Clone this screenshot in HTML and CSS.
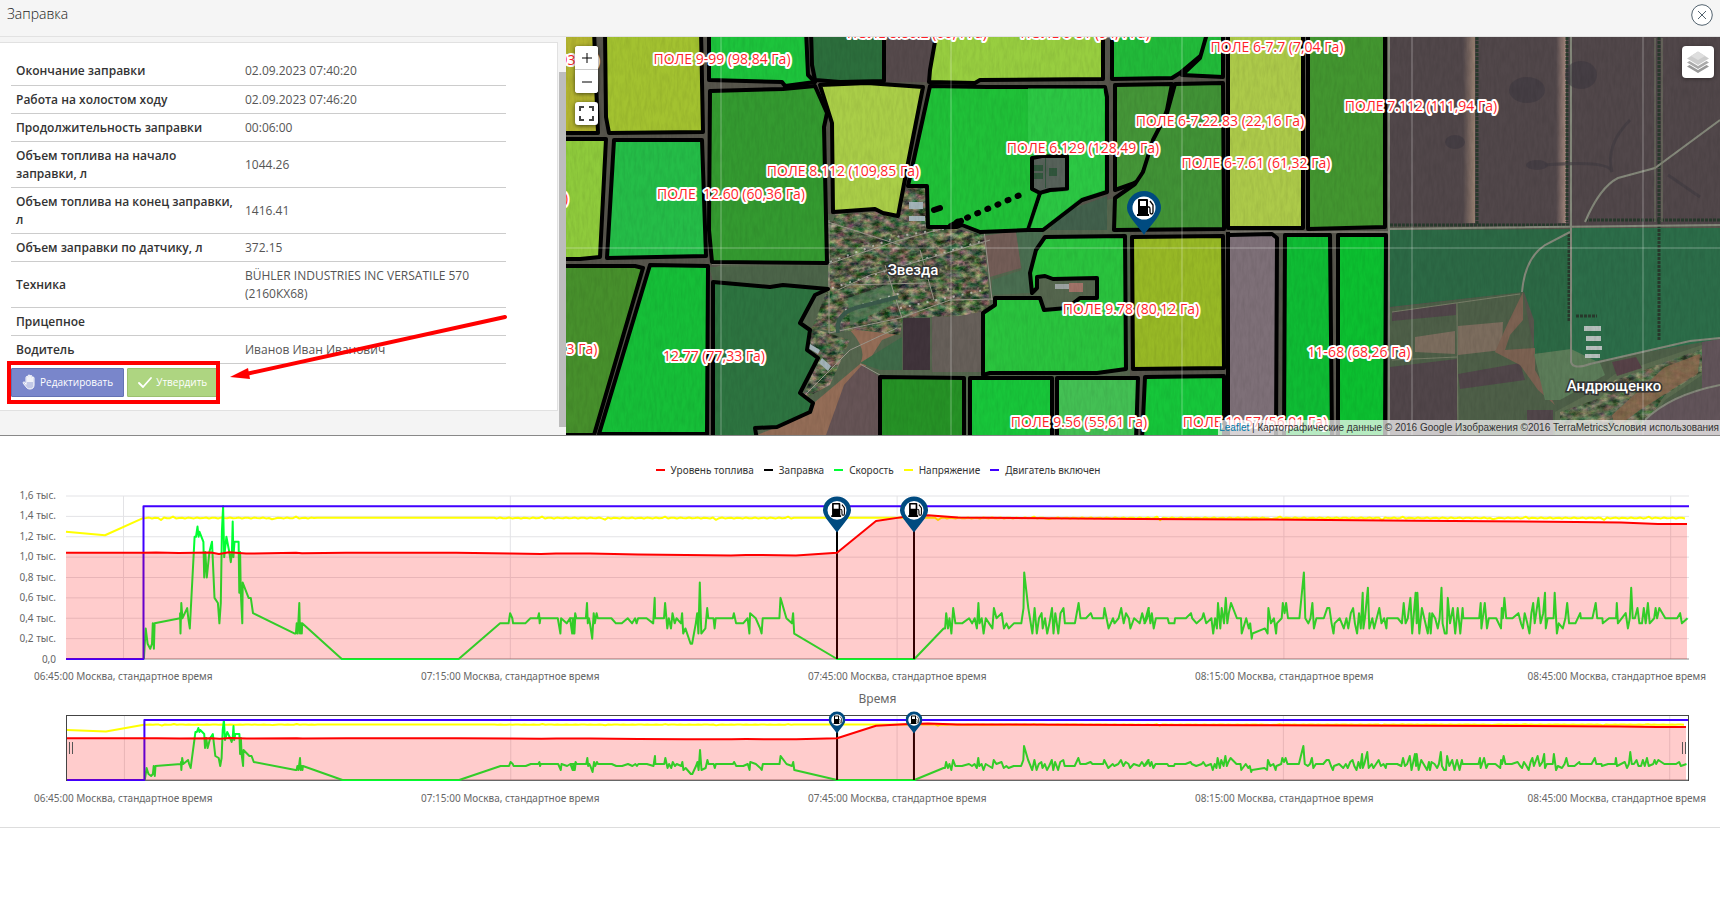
FILE: index.html
```html
<!DOCTYPE html>
<html lang="ru">
<head>
<meta charset="utf-8">
<title>Заправка</title>
<link rel="stylesheet" href="styles.css">
</head>
<body>
<svg class="defs" width="0" height="0" aria-hidden="true">
  <symbol id="fuel-pin" viewBox="0 0 34 44">
    <path d="M17 0A17 17 0 0 0 0 17C0 25 12 36 17 44C22 36 34 25 34 17A17 17 0 0 0 17 0Z" fill="#004b80"/>
    <circle cx="17" cy="17" r="11.500" fill="#fff"/>
    <path d="M12 8h8q1 0 1 1v14h1v2H10v-2h1V9q0-1 1-1zM13 10v5h6v-5z" fill="#000" fill-rule="evenodd"/>
    <path d="M21 16h1q1 0 1 2v3q0 2 1.500 2t1.500-2v-7l-3-4" fill="none" stroke="#000" stroke-width="1.300"/>
  </symbol>
</svg>
<header class="title-bar">
  <h1 class="title">Заправка</h1>
  <button class="close" type="button" aria-label="Закрыть">
    <svg viewBox="0 0 22 22"><circle cx="11" cy="11" r="10.300"/><path d="M7 7l8 8M15 7l-8 8"/></svg>
  </button>
</header>
<main>
<section class="top">
  <div class="side">
    <div class="card">
      <table class="details">
        <tr><th scope="row">Окончание заправки</th><td>02.09.2023 07:40:20</td></tr>
        <tr><th scope="row">Работа на холостом ходу</th><td>02.09.2023 07:46:20</td></tr>
        <tr><th scope="row">Продолжительность заправки</th><td>00:06:00</td></tr>
        <tr><th scope="row">Объем топлива на начало заправки, л</th><td>1044.26</td></tr>
        <tr><th scope="row">Объем топлива на конец заправки, л</th><td>1416.41</td></tr>
        <tr><th scope="row">Объем заправки по датчику, л</th><td>372.15</td></tr>
        <tr><th scope="row">Техника</th><td>BÜHLER INDUSTRIES INC VERSATILE 570 (2160КХ68)</td></tr>
        <tr><th scope="row">Прицепное</th><td></td></tr>
        <tr><th scope="row">Водитель</th><td>Иванов Иван Иванович</td></tr>
      </table>
      <div class="actions">
        <button class="btn btn-edit" type="button">
          <svg viewBox="0 0 14 16"><path d="M4 10V3.500a1 1 0 0 1 2 0V8 2a1 1 0 0 1 2 0v6V2.500a1 1 0 0 1 2 0V8 4a1 1 0 0 1 2 0v7c0 2.500-1.500 4-4 4-2 0-3-.8-4-2.200L1.300 9.300c-.7-1 .6-1.900 1.400-1.100z"/></svg>
          Редактировать</button>
        <button class="btn btn-approve" type="button">
          <svg viewBox="0 0 14 16"><path d="M1 9l4 4 8-9" stroke-width="1.800"/></svg>
          Утвердить</button>
      </div>
    </div>
    <div class="scrollbar"><div class="thumb"></div></div>
    <svg class="callout" viewBox="0 0 520 100" aria-hidden="true">
      <rect x="9" y="52" width="209" height="39" fill="none" stroke="#f00" stroke-width="4"/>
      <path d="M505 6L246 63" stroke="#f00" stroke-width="4" stroke-linecap="round"/>
      <path d="M230 66L248 57L250 68Z" fill="#f00"/>
    </svg>
  </div>
  <div class="map">
    <svg class="map-canvas" viewBox="566 37 1154 398" preserveAspectRatio="xMinYMin slice">
      <defs>
        <filter id="grain" x="0" y="0" width="100%" height="100%">
          <feTurbulence type="fractalNoise" baseFrequency="0.350 0.080" numOctaves="3" seed="4"/>
          <feColorMatrix values="0 0 0 0 0  0 0 0 0 0  0 0 0 0 0  .9 0 0 0 -.3"/>
        </filter>
        <filter id="houses" x="0" y="0" width="100%" height="100%" color-interpolation-filters="sRGB">
          <feTurbulence type="fractalNoise" baseFrequency="0.110 0.180" numOctaves="5" seed="9"/>
          <feColorMatrix values="1.300 0 0 0 -.28  .75 .6 0 0 -.27  .8 .1 .3 0 -.3  0 0 0 0 .8"/>
          <feComposite in2="SourceGraphic" operator="in"/>
        </filter>
        <linearGradient id="lane-a" gradientUnits="userSpaceOnUse" x1="1463" x2="1475" y1="0" y2="0"><stop offset="0" stop-color="#9a8273" stop-opacity="0"/><stop offset="1" stop-color="#9a8273"/></linearGradient>
        <linearGradient id="lane-b" gradientUnits="userSpaceOnUse" x1="1556" x2="1566" y1="0" y2="0"><stop offset="0" stop-color="#a88b80" stop-opacity="0"/><stop offset="1" stop-color="#a88b80"/></linearGradient>
      </defs>
      <rect x="566" y="37" width="1154" height="398" fill="#57554c"/>
      <!-- open land -->
      <path d="M828 214L984 225L1130 195V380H983V435H757L710 270Z" fill="#55664e"/>
      <path d="M710 267L828 266V287L713 281Z" fill="#4c6449"/>
      <path d="M983 236L1016 231L1021 268L990 277Z" fill="#735d57"/>
      <path d="M932 316L982 308V372H932Z" fill="#67605a"/>
      <path d="M903 318H930V370H903Z" fill="#40343b"/>
      <path d="M1016 231L1043 232L1030 270V293L992 295V280L1022 270Z" fill="#4a6e51"/>
      <path d="M838 328L850 330Q868 350 860 364L815 402L812 413L757 435H830Q840 400 860 375L882 340L897 334" fill="#946d57"/>
      <path d="M862 365L880 377V435H826L844 385Z" fill="#665456"/>
      <path d="M860 363L902 337V370H880Z" fill="#3f6b49"/>
      <path d="M886 36H935L928 82H885Z" fill="#564a4c"/>
      <path d="M1229 236H1277V435H1229Z" fill="#7e7078"/>
      <path d="M1056 215L1107 196V230H1050Z" fill="#42604c"/>
      <!-- settlement -->
      <g filter="url(#houses)">
        <path d="M828 222L905 212L945 226L984 235L988 280L990 310L960 316L903 318L900 335L860 330L838 332L812 328L828 288Z"/>
        <path d="M835 214L880 212L910 188H927V225L880 235H830ZM803 325L850 340L830 385L802 400L818 358Z"/>
      </g>
      <path d="M848 298L893 282L892 305L850 325Z" fill="#4b7a54" opacity=".7"/>
      <g fill="none" stroke="#292f27" stroke-width="2" stroke-dasharray="4 2" opacity=".55">
        <path d="M830 257L900 232L948 222M830 279L940 247L985 232M838 300L900 280L985 258M925 290L990 288"/>
      </g>
      <g fill="none" stroke="#d4d6d1" stroke-width="2" stroke-dasharray="2 7" opacity=".7">
        <path d="M830 262L900 236L950 228M832 288L940 254L985 240M845 310L905 292M900 308L984 290"/>
      </g>
      <g fill="none" stroke="#9b978c" stroke-width="1">
        <path d="M712 264H828L900 240L945 228M829 220V333L900 318L950 300L993 299M838 290L870 275L940 255L990 240M885 265L902 318M920 250L934 300M845 285L926 283M800 400L850 350L897 328M860 364L880 375M828 222L900 245M984 230L992 300M1230 232H1388"/>
        <path d="M838 333Q835 315 855 308L898 297" stroke="#3b5a4b" stroke-width="4"/>
      </g>
      <path d="M909 202h14v7h-14zM909 216h16v5h-16zM810 344l10 6 -2 4 -10-6zM822 358l9 8 -3 5 -9-8z" fill="#a3b3b8"/>
      <!-- eastern land -->
      <path d="M1388 37H1720V226H1388Z" fill="#51474a"/>
      <path d="M1390 308L1523 292L1534 350L1570 352L1571 230H1658V340L1720 338V435H1390Z" fill="#4e5f48"/>
      <path d="M1390 230L1571 229V350L1534 354V320L1524 292L1390 307Z" fill="#2c6945"/>
      <path d="M1572 228H1720V339L1572 365Z" fill="#2c6d49"/>
      <path d="M1392 312L1456 303V315L1392 321ZM1390 367L1457 359V435H1390ZM1458 374L1520 363L1525 380L1460 389ZM1527 410H1553V435H1527Z" fill="#51464a"/>
      <path d="M1415 337L1455 331V354L1415 352ZM1458 326L1503 322L1502 350L1458 355Z" fill="#7c6d5e"/>
      <path d="M1523 292V320L1510 335L1505 350L1535 348V370L1555 405L1538 390L1520 365L1495 352L1507 325Z" fill="#7c6252"/>
      <path d="M1534 354L1571 349L1600 363L1605 375L1560 400H1545Z" fill="#5c7c59"/>
      <path d="M1555 412L1590 393L1615 374L1702 345V375L1665 400L1645 435H1555Z" fill="#5b6c50"/>
      <path d="M1560 412L1600 398L1615 380L1702 349V372L1665 395L1645 425L1560 428Z" filter="url(#houses)" opacity=".7"/>
      <path d="M1612 362L1636 357L1642 368L1617 376Z" fill="#574248"/>
      <path d="M1665 367L1700 354L1698 373L1640 410L1615 428L1612 415Z" fill="#8c684d" opacity=".8"/>
      <path d="M1645 420Q1670 395 1702 390V342L1720 339V435H1636Z" fill="#62545a"/>
      <path d="M1463 37h12v186h-12z" fill="url(#lane-a)"/>
      <path d="M1556 37h10v186h-10z" fill="url(#lane-b)"/>
      <g fill="none" stroke-dasharray="3 1" stroke="#293a2d" stroke-width="3">
        <path d="M1477 37V224M1567 37V222M1659 37V340M1390 225H1570M1585 220H1720M1569 234V322M1576 316H1597"/>
      </g>
      <g fill="none" stroke="#85897b" stroke-width="2">
        <path d="M1571 37V362Q1573 370 1590 364L1690 341L1720 338M1388 229L1720 225M1585 222Q1600 187 1618 178L1655 168L1720 120M1570 232L1545 245Q1525 258 1522 292M1645 420Q1670 395 1720 385M1389 37V435"/>
        <path d="M1457 303L1458 435M1392 312L1520 294M1655 38V222M1662 38V222M1392 360L1457 357" stroke-width="1" stroke="#777d67"/>
      </g>
      <g fill="#3b363f" opacity=".5"><ellipse cx="1527" cy="90" rx="18" ry="13"/><ellipse cx="1581" cy="75" rx="16" ry="14"/><ellipse cx="1455" cy="142" rx="10" ry="7"/><ellipse cx="1537" cy="165" rx="11" ry="5"/></g>
      <path d="M1545 165Q1610 160 1612 172Q1605 145 1630 120M1668 175L1700 197" fill="none" stroke="#403a41" stroke-width="3" opacity=".6"/>
      <g fill="#b7c0bd"><path d="M1584 326h17v5h-17zM1586 336h15v5h-15zM1586 346h16v4h-16zM1585 354h15v4h-15z"/></g>
      <!-- fields -->
      <g class="fields">
        <path fill="#b3b430" d="M560 30H594L598 133H560Z"/>
        <path fill="#a3c230" d="M605 30H701L703 132L609 133L606 117Z"/>
        <path fill="#1dc43c" d="M709 30H806L808 75L815 82L785 86L782 82L709 80Z"/>
        <path fill="#2c6e3c" d="M811 30H884V81L840 82L815 80L812 65Z"/>
        <path fill="#98ce40" d="M937 30H1103V79L980 80L975 83L929 82L930 70Z"/>
        <path fill="#349a30" d="M710 91L783 89L815 86L827 113L824 127L827 263L712 262L709 230Z"/>
        <path fill="#aace48" d="M820 85L867 83L923 87L908 163L898 216L883 213L875 209L833 212L832 123Z"/>
        <path fill="#20c138" d="M930 86L987 87H1105L1107 97V192L1082 200L1043 230H1028L980 232L962 225L957 227H928L927 186H908Z"/>
        <path fill="#22bb3a" d="M1112 30H1207L1205 52L1180 73L1172 78L1112 79Z"/>
        <path fill="#22bb3a" d="M1208 30H1223V77L1182 75L1200 58Z"/>
        <path fill="#459638" d="M1115 85L1172 84L1167 110L1152 150L1140 180L1132 184L1115 190Z"/>
        <path fill="#419236" d="M1175 84L1223 83L1224 229L1114 230L1115 198L1135 184L1143 172L1153 140L1167 113Z"/>
        <path fill="#adca4a" d="M1228 30H1303V228H1228Z"/>
        <path fill="#439630" d="M1308 30H1385V227L1308 229Z"/>
        <path fill="#8fcb3c" d="M560 139H606L600 257L580 259H560Z"/>
        <path fill="#25bd48" d="M614 140H702L706 256L607 258Z"/>
        <path fill="#47902c" d="M560 266H635L643 268L594 435H560Z"/>
        <path fill="#16bf38" d="M650 265L708 266L707 434H599Z"/>
        <path fill="#2d7440" d="M713 282L770 287L783 285L828 289L815 295L800 323L810 330L807 350L818 358L800 393L813 403L810 412L777 427L755 428L757 440H713Z"/>
        <path fill="#2ac43e" d="M1032 293L1030 273L1036 250L1045 237L1125 236L1126 369L1097 373H990L983 375V313L995 305V298L1040 298L1044 310L1067 308L1080 298H1097V278L1053 279L1045 276L1037 277V288Z"/>
        <path fill="#98b926" d="M1132 237L1223 236L1224 368L1133 369Z"/>
        <path fill="#0fbc34" d="M1285 235H1330L1332 440H1284Z"/>
        <path fill="#0cc030" d="M1338 235H1386L1385 440H1338Z"/>
        <path fill="#269226" d="M880 377L964 378V440H880Z"/>
        <path fill="#18c63a" d="M970 378H1052V440H970Z"/>
        <path fill="#44c054" d="M1057 378H1138L1136 440H1057Z"/>
        <path fill="#16c63a" d="M1145 377L1224 376V440H1142Z"/>
        <path fill="#57625a" d="M1032 158L1042 156H1067V189L1050 190L1040 193L1032 189Z"/>
        <path fill="none" d="M1040 193L1028 230M1229 235L1272 234L1277 238L1276 440M1228 232V435"/>
      </g>
      <path d="M1028 88H1104V190L1080 198L1042 228H1030L1042 194L1069 190V154L1028 156Z" fill="#3bd055" opacity=".45"/>
      <path d="M1045 158h1v30h-1zM1034 165h9v6h-9zM1034 173h9v6h-9zM1049 168h8v8h-8z" fill="#31563c"/>
      <path d="M1055 284h22v5h-22z" fill="#9da4a3"/><path d="M1069 283h14v9h-14z" fill="#a17368"/>
      <path d="M957 222L1027 192" stroke="#000" stroke-width="6" stroke-linecap="round" stroke-dasharray="1 10"/>
      <path d="M951 226L961 221M934 210L940 208" stroke="#000" stroke-width="6" stroke-linecap="round"/>
      <rect x="566" y="37" width="1154" height="398" filter="url(#grain)" opacity=".14"/>
      <path d="M721 37V435M951 37V435M1182 37V435M1412 37V435M1643 37V435M566 248H1720" fill="none" stroke="#fff" stroke-opacity=".35"/>
      <g class="field-labels">
        <text x="722" y="64">ПОЛЕ 9-99 (98,84 Га)</text>
        <text x="843" y="176">ПОЛЕ 8.112 (109,85 Га)</text>
        <text x="731" y="199">ПОЛЕ &#160;12.60 (60,36 Га)</text>
        <text x="714" y="361">12.77 (77,33 Га)</text>
        <text x="582" y="354">3 Га)</text>
        <text x="579" y="65">93 Га)</text>
        <text x="566" y="203">)</text>
        <text x="917" y="38">ПОЛЕ 8.86.2 (66,4 Га)</text>
        <text x="1085" y="38">ПОЛЕ 6-81 (94,4 Га)</text>
        <text x="1277" y="52">ПОЛЕ 6-7.7 (7,04 Га)</text>
        <text x="1220" y="126">ПОЛЕ 6-7.22.83 (22,16 Га)</text>
        <text x="1083" y="153">ПОЛЕ 6.129 (128,49 Га)</text>
        <text x="1256" y="168">ПОЛЕ 6-7.61 (61,32 Га)</text>
        <text x="1421" y="111">ПОЛЕ 7.112 (111,94 Га)</text>
        <text x="1131" y="314">ПОЛЕ 9.78 (80,12 Га)</text>
        <text x="1359" y="357">11-68 (68,26 Га)</text>
        <text x="1079" y="427">ПОЛЕ 9.56 (55,61 Га)</text>
        <text x="1255" y="427">ПОЛЕ 10.57 (56,01 Га)</text>
      </g>
      <g class="place-labels">
        <text x="913" y="275">Звезда</text>
        <text x="1614" y="391">Андрющенко</text>
      </g>
      <use href="#fuel-pin" x="1127" y="191" width="34" height="44"/>
    </svg>
    <div class="map-controls">
      <div class="zoom-group">
        <button type="button" aria-label="Приблизить"><svg viewBox="0 0 10 10"><path d="M5 0v10M0 5h10"/></svg></button>
        <button type="button" aria-label="Отдалить"><svg viewBox="0 0 10 10"><path d="M0 5h10"/></svg></button>
      </div>
      <button class="fullscreen" type="button" aria-label="На весь экран"><svg viewBox="0 0 15 15"><path d="M1 5V1h4M10 1h4v4M14 10v4h-4M5 14H1v-4"/></svg></button>
    </div>
    <button class="layers" type="button" aria-label="Слои">
      <svg viewBox="0 0 24 24"><path d="M1 16.500L12 23l11-6.500-2.500-1.500L12 20l-8.500-5z" fill="#999"/><path d="M1 12.500L12 19l11-6.500-2.500-1.500L12 16l-8.500-5z" fill="#aaa"/><path d="M1 8.500L12 1.500l11 7L12 15z" fill="#ccc"/><path d="M5 6l7-4.500L19 6l-7 4z" fill="#dedede"/></svg>
    </button>
    <div class="attribution"><a href="#leaflet">Leaflet</a> | Картографические данные © 2016 Google Изображения ©2016 TerraMetricsУсловия использования</div>
  </div>
</section>
<section class="charts">
  <ul class="legend">
    <li class="fuel">Уровень топлива</li><li class="refuel">Заправка</li><li class="speed">Скорость</li><li class="voltage">Напряжение</li><li class="engine">Двигатель включен</li>
  </ul>
  <div class="chart-row">
    <div class="y-axis"><span>1,6 тыс.</span><span>1,4 тыс.</span><span>1,2 тыс.</span><span>1,0 тыс.</span><span>0,8 тыс.</span><span>0,6 тыс.</span><span>0,4 тыс.</span><span>0,2 тыс.</span><span>0,0</span></div>
    <div class="plot main-plot">
      <svg class="series" viewBox="0 0 1623 1600" preserveAspectRatio="none"></svg>
      <svg class="pin pin-start"><use href="#fuel-pin"/></svg>
      <svg class="pin pin-end"><use href="#fuel-pin"/></svg>
    </div>
  </div>
  <div class="x-axis"><span>06:45:00 Москва, стандартное время</span><span>07:15:00 Москва, стандартное время</span><span>07:45:00 Москва, стандартное время</span><span>08:15:00 Москва, стандартное время</span><span>08:45:00 Москва, стандартное время</span></div>
  <div class="axis-title">Время</div>
  <div class="chart-row overview-row">
    <div class="plot overview">
      <svg class="series" viewBox="0 0 1623 1600" preserveAspectRatio="none"></svg>
      <svg class="pin pin-start"><use href="#fuel-pin"/></svg>
      <svg class="pin pin-end"><use href="#fuel-pin"/></svg>
      <i class="grip grip-left"></i><i class="grip grip-right"></i>
    </div>
  </div>
  <div class="x-axis"><span>06:45:00 Москва, стандартное время</span><span>07:15:00 Москва, стандартное время</span><span>07:45:00 Москва, стандартное время</span><span>08:15:00 Москва, стандартное время</span><span>08:45:00 Москва, стандартное время</span></div>
</section>
</main>
<script src="chart.js"></script>
</body>
</html>
```
FILE: styles.css
```css
* { box-sizing: border-box; }
body { margin: 0; background: #fff; color: #444; font: 12px/18px "Open Sans", "Noto Sans", sans-serif; }
button { font: inherit; padding: 0; cursor: pointer; }
.defs { position: absolute; }
.title-bar { display: flex; justify-content: space-between; align-items: flex-start; height: 37px; padding: 4px 7px; background: #f5f5f5; border-bottom: 1px solid #e2e2e2; }
.title { margin: 0; font-size: 14px; line-height: 20px; font-weight: 300; color: #222; }
.close { width: 22px; height: 22px; border: 0; background: none; }
.close svg { display: block; width: 22px; height: 22px; fill: #fff; stroke: #53636f; }
.top { display: flex; border-bottom: 1px solid #888; }
.side { position: relative; display: flex; flex: 0 0 566px; align-items: stretch; background: #f4f4f4; padding: 5px 0 24px; }
.card { flex: 1; background: #fff; border: 1px solid #e1e1e1; border-left: 0; padding: 14px 51px 13px 11px; }
.details { width: 100%; border-collapse: collapse; table-layout: fixed; }
.details th, .details td { padding: 5px 5px 4px; border-bottom: 1px solid #ccc; text-align: left; vertical-align: middle; height: 28px; }
.details th { width: 229px; font-weight: 600; padding-right: 0; color: #333; }
.details td { color: #555; }
.actions { display: flex; gap: 3px; padding-top: 4px; }
.btn { display: flex; align-items: center; gap: 4px; height: 29px; padding: 0 10px; font-size: 10px; color: #fff; border: 1px solid; border-radius: 1px; }
.btn svg { width: 14px; height: 16px; fill: none; stroke: #fff; stroke-linecap: round; stroke-linejoin: round; }
.btn-edit { background: #7986cb; border-color: #6472b4; }
.btn-edit svg { fill: rgba(255,255,255,.55); }
.btn-approve { background: #aed581; border-color: #9cc070; }
.scrollbar { align-self: stretch; width: 8px; margin: -5px 0 -24px; padding: 35px 0 8px 1px; background: #f4f4f4; }
.thumb { height: 100%; background: #bdbdbd; }
.callout { position: absolute; left: 0; bottom: 24px; width: 520px; height: 100px; pointer-events: none; }
.map { position: relative; flex: 1; min-width: 0; overflow: hidden; }
.map-canvas { position: absolute; inset: 0; width: 100%; height: 100%; }
.fields { stroke: #000; stroke-width: 4; stroke-linejoin: round; }
.field-labels { font-size: 14px; text-anchor: middle; fill: #ff1f2a; stroke: #fff; stroke-width: 4; stroke-linejoin: round; paint-order: stroke; }
.place-labels { font: 500 15px Roboto, sans-serif; text-anchor: middle; fill: #fff; stroke: #333; stroke-width: 3; paint-order: stroke; }
.map-controls { position: absolute; left: 9px; top: 9px; display: grid; gap: 9px; }
.zoom-group { border-radius: 3px; overflow: hidden; background: #fff; box-shadow: 0 1px 4px rgba(0,0,0,.6); }
.zoom-group button, .fullscreen { display: grid; place-items: center; width: 23px; height: 23px; border: 0; background: #fff; }
.zoom-group button + button { height: 24px; border-top: 1px solid #ccc; }
.fullscreen { border-radius: 3px; box-shadow: 0 1px 4px rgba(0,0,0,.6); }
.zoom-group svg { width: 10px; height: 10px; stroke: #000; stroke-width: 1; }
.fullscreen svg { width: 15px; height: 15px; fill: none; stroke: #444; stroke-width: 2; }
.layers { position: absolute; right: 6px; top: 9px; width: 32px; height: 32px; display: grid; place-items: center; border: 0; border-radius: 4px; background: #fff; box-shadow: 0 1px 4px rgba(0,0,0,.4); }
.layers svg { width: 24px; height: 24px; }
.attribution { position: absolute; right: 0; bottom: 0; padding: 0 1px; font: 10px/15px "Liberation Sans", sans-serif; white-space: nowrap; color: #333; background: rgba(255,255,255,.7); }
.attribution a { color: #0078a8; text-decoration: none; }
.charts { padding: 24px 0 20px; border-bottom: 1px solid #ddd; font: 10px/18px "Noto Sans", sans-serif; }
.legend { display: flex; justify-content: center; gap: 10px; margin: 0 0 16px 36px; padding: 0; list-style: none; color: #333; line-height: 20px; }
.legend li { display: flex; align-items: center; gap: 6px; }
.legend li::before { content: ""; width: 9px; height: 2px; background: currentColor; }
.legend .fuel::before { background: #f00; }
.legend .refuel::before { background: #000; }
.legend .speed::before { background: #00ff33; }
.legend .voltage::before { background: #ff0; }
.legend .engine::before { background: #4000ff; }
.chart-row { display: flex; padding-right: 31px; }
.y-axis { display: flex; flex-direction: column; justify-content: space-between; width: 66px; height: 182px; margin: -10px 0 -9px; padding-right: 10px; text-align: right; color: #666; }
.plot { position: relative; flex: 1; min-width: 0; height: 163px; }
.overview-row { padding-left: 66px; }
.overview { height: 66px; border: 1px solid #444; }
.series { display: block; width: 100%; height: 100%; overflow: visible; fill: none; }
.series path { vector-effect: non-scaling-stroke; stroke-width: 2px; stroke-linejoin: round; }
.series .grid { stroke: #e3e3e6; stroke-width: 1px; }
.series .axis { stroke: #888; stroke-width: 1px; }
.overview .grid-h { display: none; }
.series .speed { stroke: #00ff33; }
.series .voltage { stroke: #ff0; }
.series .engine { stroke: #4000ff; }
.series .refuel { stroke: #000; }
.series .fuel { stroke: #f00; }
.series .fuel-area { fill: rgba(255,0,0,.2); stroke: none; }
.pin { position: absolute; top: 0; width: 28px; height: 37px; transform: translateX(-50%); }
.pin-start { left: 47.500%; }
.pin-end { left: 52.250%; }
.overview .pin { top: -5px; width: 17px; height: 23px; }
.x-axis { display: flex; height: 18px; margin-top: 8px; color: #666; }
.x-axis span { flex: 0 0 22.500%; min-width: 0; padding-left: 34px; white-space: nowrap; }
.x-axis span:nth-child(4) { flex-shrink: 1; }
.x-axis span:last-child { flex: none; padding: 0 14px 0 0; }
.axis-title { margin: 4px 0 6px; padding-left: 35px; text-align: center; font-size: 12px; color: #666; line-height: 20px; }
.grip { position: absolute; top: 26px; width: 4px; height: 12px; border: solid #555; border-width: 0 1px; }
.grip-left { left: 2px; }
.grip-right { right: 2px; }
```
FILE: chart.js
```js
// Speed samples: tick,level; one level is 50 units on the value axis.
const TICK = 2.7034;
const speedRuns = [
  { start: -66, data: "389,0 394,6 399,3 406,2 411,3 413,7 416,2 418,7 487,8 487,9 488,5 490,11 493,8 506,10 509,8 513,6 526,24 530,24 534,26 537,24 539,25 550,23 552,16 555,21 559,16 566,21 573,23 580,12 589,11 593,7 597,11 600,25 603,30 606,20 612,24 620,21 624,19 627,21 629,27 631,20 634,23 645,23 647,13 649,21 651,13 655,7 656,15 672,12 678,12 684,9 797,5 800,5 802,7 805,5 809,11 811,5 814,7 816,5 817,7 924,0 1240,0 1352,7 1375,7 1379,9 1385,8 1387,7 1420,7 1434,8 1454,8 1457,9 1459,7 1461,8 1508,8 1515,5 1517,8 1532,7 1541,8 1547,5 1549,8 1551,5 1555,9 1558,8" },
  { start: 504, data: "0,8 6,5 9,8 12,5 14,8 43,8 46,11 48,7 51,8 54,7 60,4 64,9 67,7 72,9 75,8 112,8 124,7 140,7 156,8 168,7 176,8 180,7 184,8 207,8 225,7 229,12 230,8 254,8 257,11 263,6 267,8 273,6 277,9 283,7 288,8 300,7 303,9 306,5 312,6 326,3 330,3 340,7 344,9 347,5 351,15 355,5 366,6 371,10 374,8 388,8 391,6 394,8 440,8 443,9 449,7 468,7 480,8 485,5 487,9 502,8 514,6 518,5 521,8 566,8 569,12 585,8 600,7 603,9 606,5 722,0 931,0 1010,6 1014,6 1017,9 1022,6 1026,8 1031,5 1036,10 1042,7 1060,7 1079,8 1087,7 1094,8 1100,6 1104,11 1107,7 1113,8 1118,5 1124,8 1133,7 1142,6 1146,10 1153,8 1167,9 1173,6 1180,7 1186,6 1200,7 1220,7 1226,10 1228,17 1239,10 1250,5 1256,10 1262,5 1268,8 1275,9 1278,6 1284,8 1290,5 1296,7 1303,10 1307,5 1312,9 1320,5 1326,9 1334,10 1338,7 1365,7 1375,11 1380,8 1395,8 1408,9 1413,8 1442,8 1445,10 1456,6 1468,8 1472,7 1483,8 1490,10 1497,7 1503,9 1511,8 1515,6 1525,8 1540,7 1547,9 1554,7 1560,8 1565,10" },
  { start: 1074, data: "12,7 23,10 28,7 32,9 37,6 43,8 75,8 78,7 93,7 95,8 124,8 138,9 141,8 153,7 168,8 172,9 179,7 193,8 198,5 203,8 208,6 211,11 217,6 221,10 227,7 232,12 236,7 240,9 246,11 262,8 273,8 275,5 287,8 294,6 298,7 302,4 304,5 338,6 345,5 347,10 354,7 362,8 368,5 370,7 383,8 386,11 391,9 395,11 400,8 431,8 443,17 447,8 455,7 461,8 466,11 470,6 477,8 497,8 506,10 512,10 518,7 523,5 526,7 540,8 551,6 558,8 563,6 570,9 576,10 581,7 587,5 592,9 597,6 602,13 604,6 608,8 616,14 620,6 628,8 633,6 647,10 653,7 660,8 666,6 668,8 697,8 708,7 713,11 718,7 724,8 731,12 736,5 745,13 748,7 750,13 755,5 762,10 778,5 783,9 786,5 790,9 798,8 805,6 810,8 815,14 818,7 824,5 829,5 832,12 838,7 846,10 852,5 859,10 866,5 872,10 874,8 917,8 921,11 923,6 932,11 938,6 943,8 963,8 976,6 978,10 981,8 985,12 990,8 1007,8 1023,9 1030,7 1035,6 1040,9 1047,7 1053,5 1058,9 1063,11 1067,7 1077,12 1083,7 1090,9 1095,13 1097,6 1102,8 1118,8 1121,13 1127,5 1132,7 1143,6 1150,8 1155,11 1160,7 1177,7 1190,9 1192,8 1223,8 1232,11 1236,8 1250,8 1251,7 1268,8 1287,8 1289,11 1292,7 1313,9 1319,6 1324,8 1328,14 1332,8 1338,8 1345,10 1350,7 1357,7 1362,10 1367,7 1373,11 1378,7 1390,8 1394,10 1398,8 1404,10 1420,8 1452,8 1460,9 1465,7 1480,8" }
];
const speed = speedRuns.flatMap(run => run.data.split(" ").map(pair => {
  const [t, level] = pair.split(",").map(Number);
  return [run.start + t / TICK, level * 50];
}));

const fuel = [[0,1043],[77,1043],[90,1046],[113,1040],[145,1046],[153,1030],[163,1048],[180,1035],[230,1044],[236,1038],[280,1043],[390,1043],[445,1036],[475,1030],[490,1036],[524,1036],[572,1026],[620,1020],[665,1016],[680,1022],[730,1016],[771,1043],[810,1355],[838,1395],[862,1410],[892,1390],[1074,1375],[1185,1370],[1350,1358],[1510,1346],[1555,1340],[1592,1325],[1621,1325]];
const voltage = [[0,1250],[39,1215],[77,1382]];
for (let x = 80, i = 0; x < 1621; x += 3, i++) {
  const quiet = (x > 250 && x < 430) || (x > 730 && x < 870);
  voltage.push([x, quiet ? 1386 : 1384 + Math.sin(i * 2.3) * 5 - (i % 37 === 5 ? 16 : 0) + (i % 41 === 9 ? 9 : 0)]);
}
const engine = [[0,0],[77.500,0],[77.500,1500],[1623,1500]];

const line = points => "M" + points.map(([x, v]) => x.toFixed(1) + " " + (1600 - v).toFixed(0)).join("L");
let gridH = "", gridV = "";
for (let v = 0; v < 1600; v += 200) gridH += "M0 " + v + "H1623";
for (let x = 57.500; x < 1623; x += 386.800) gridV += "M" + x + " 0V1600";
const paths = [
  ["grid grid-h", gridH], ["grid", gridV], ["axis", "M0 1600H1623"],
  ["voltage", line(voltage)], ["speed", line(speed)], ["engine", line(engine)],
  ["refuel", "M771 1600V200M848 1600V200"],
  ["fuel-area", line(fuel) + "L1621 1600L0 1600Z"], ["fuel", line(fuel)]
];
document.querySelectorAll(".series").forEach(svg => {
  paths.forEach(([name, d]) => {
    const path = document.createElementNS("http://www.w3.org/2000/svg", "path");
    path.setAttribute("class", name);
    path.setAttribute("d", d);
    svg.appendChild(path);
  });
});
```
